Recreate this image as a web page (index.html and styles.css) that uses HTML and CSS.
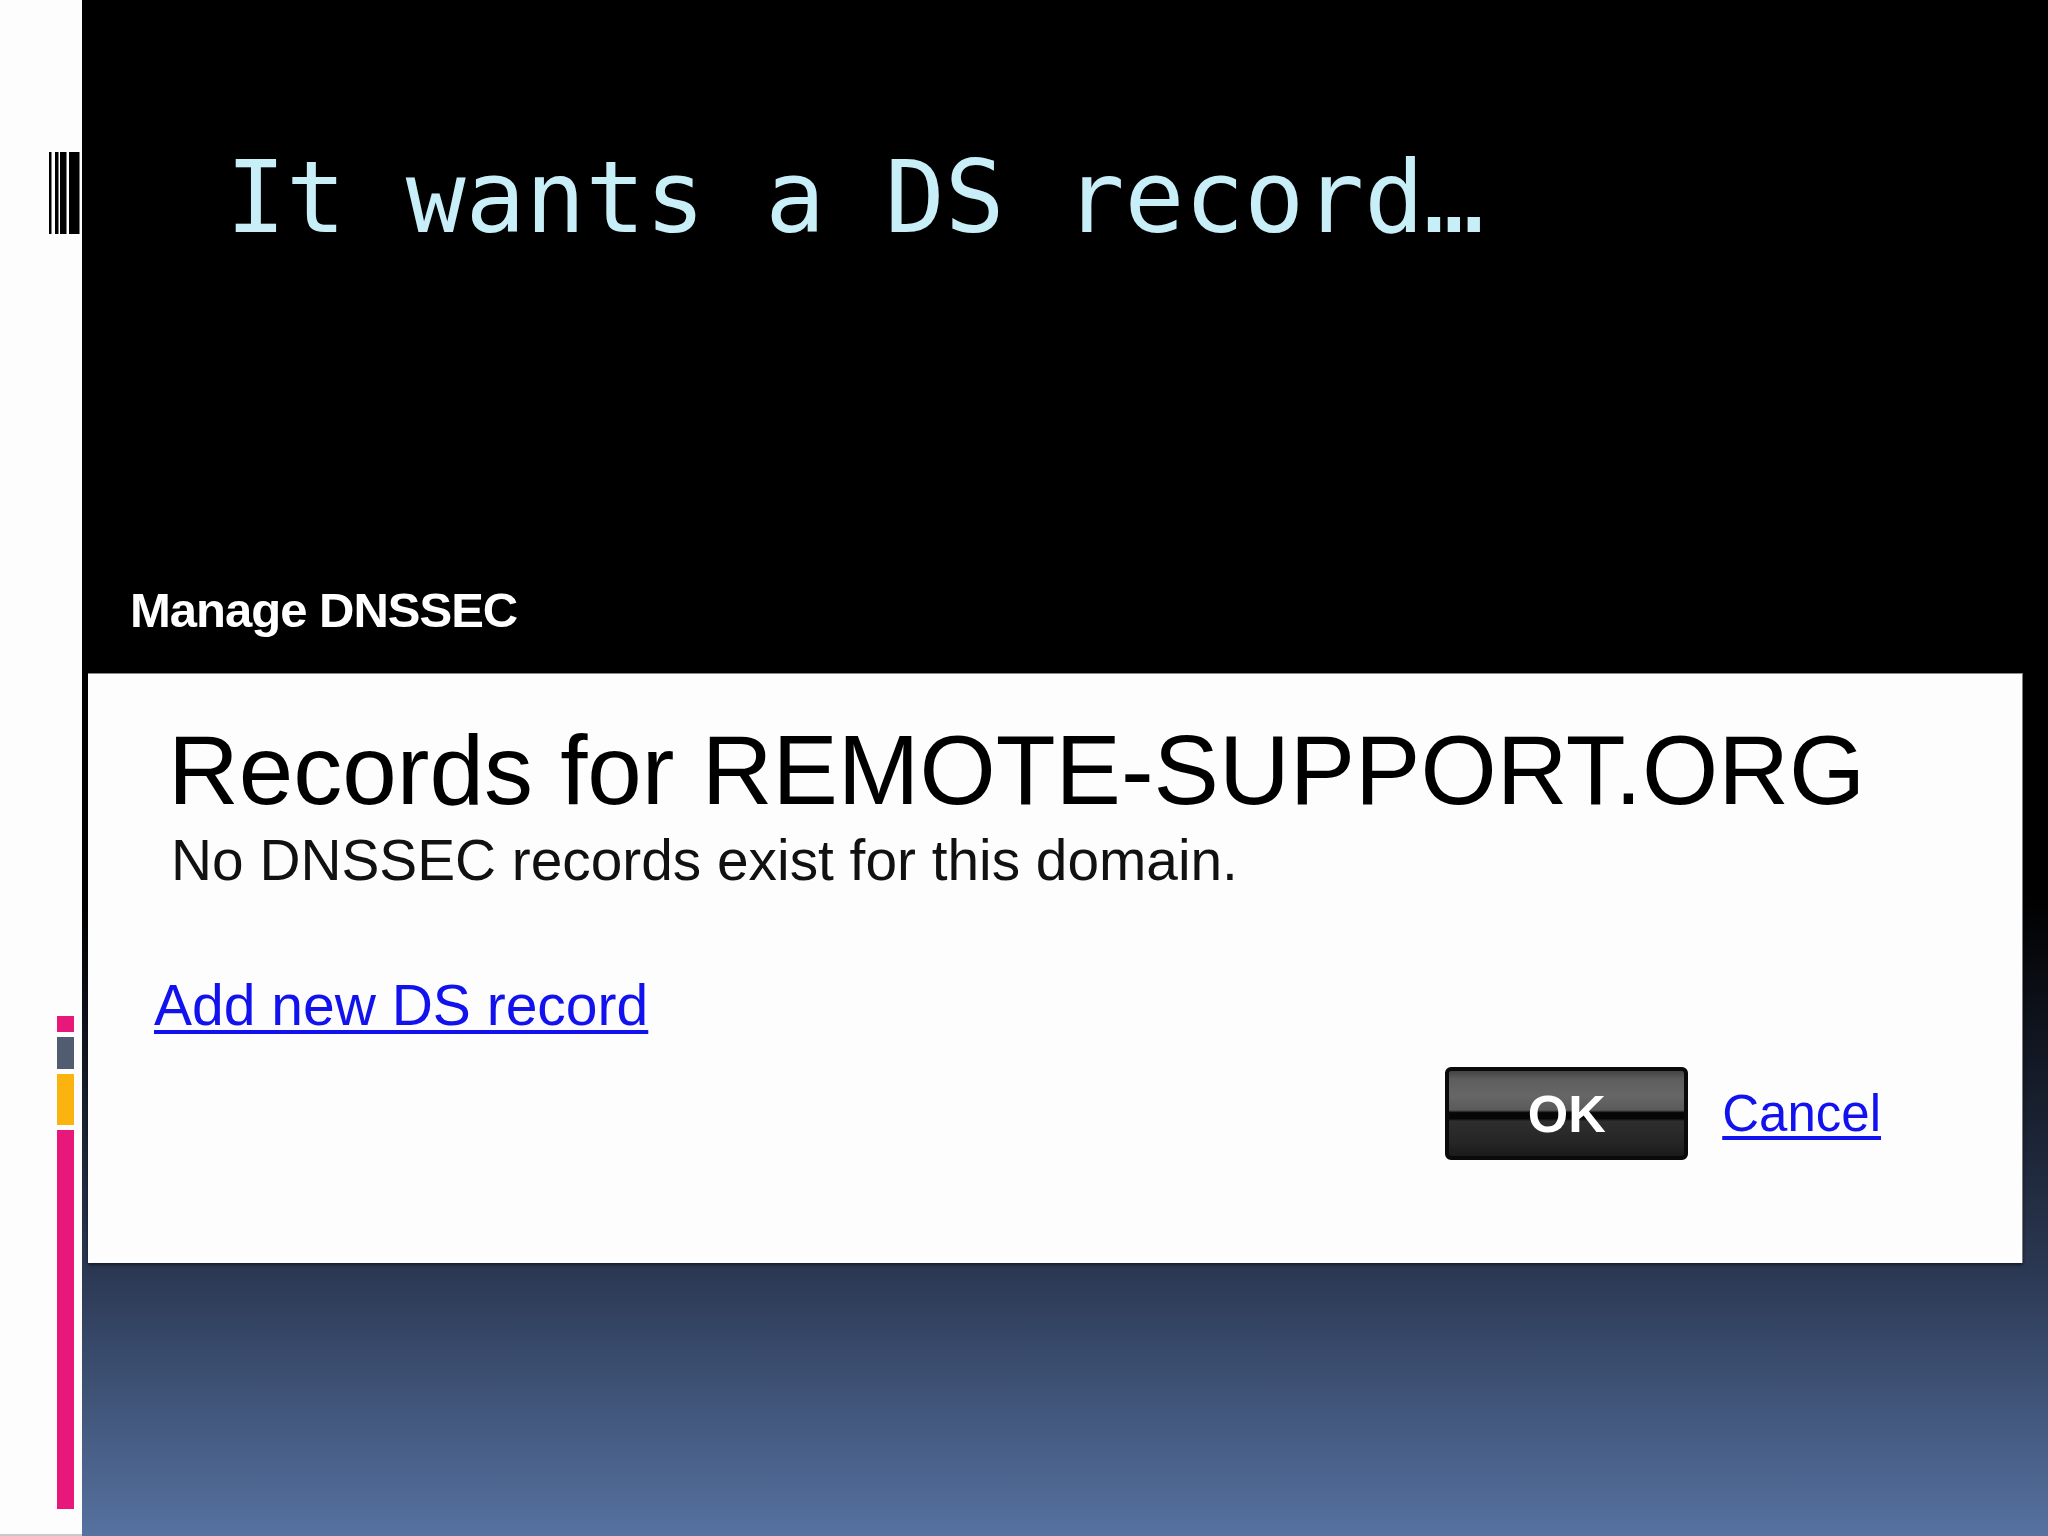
FILE: index.html
```html
<!DOCTYPE html>
<html lang="en">
<head>
    <meta charset="UTF-8">
    <title>It wants a DS record</title>
    <link rel="stylesheet" href="styles.css">
</head>
<body>
<div class="slide">
    <!-- left strip with the theme marks -->
    <aside class="strip">
        <svg class="barcode" width="31" height="82" viewBox="0 0 31 82">
            <rect x="0" y="0" width="2.5" height="82" fill="#000"/>
            <rect x="6" y="0" width="3.5" height="82" fill="#000"/>
            <rect x="11" y="0" width="6.5" height="82" fill="#000"/>
            <rect x="20" y="0" width="10.5" height="82" fill="#000"/>
        </svg>
        <div class="marks">
            <div class="mark pink-short"></div>
            <div class="mark gray"></div>
            <div class="mark yellow"></div>
            <div class="mark pink-long"></div>
        </div>
    </aside>

    <main class="stage">
        <h1 class="slide-title">It wants a DS record…</h1>

        <div class="dialog">
            <div class="dialog-title">Manage DNSSEC</div>
            <div class="dialog-body">
                <h2 class="records-title">Records for REMOTE-SUPPORT.ORG</h2>
                <p class="records-note">No DNSSEC records exist for this domain.</p>
                <a class="add-link" href="#">Add new DS record</a>
                <div class="dialog-actions">
                    <button class="ok-btn">OK</button>
                    <a class="cancel-link" href="#">Cancel</a>
                </div>
            </div>
        </div>
    </main>
</div>
</body>
</html>
```

FILE: styles.css
```css
html, body {
    margin: 0;
    padding: 0;
}
body {
    width: 2048px;
    height: 1536px;
    overflow: hidden;
    font-family: 'Liberation Sans', Arial, sans-serif;
}
.slide {
    display: flex;
    width: 2048px;
    height: 1536px;
}
.strip {
    width: 82px;
    flex: none;
    background-color: #fdfdfd;
    display: flex;
    flex-direction: column;
    align-items: flex-end;
    box-sizing: border-box;
    border-bottom: 2px solid #c9c9c9;
}
.barcode {
    display: block;
    margin-top: 152px;
    margin-right: 2px;
}
.marks {
    margin-top: auto;
    margin-bottom: 25px;
    margin-right: 8px;
    width: 17px;
    display: flex;
    flex-direction: column;
    gap: 5px;
}
.mark {
    width: 17px;
}
.pink-short {
    height: 16px;
    background-color: #e8177a;
}
.gray {
    height: 32px;
    background-color: #525c70;
}
.yellow {
    height: 51px;
    background-color: #fbb40f;
}
.pink-long {
    height: 379px;
    background-color: #e8177a;
}
.stage {
    flex: 1;
    display: flex;
    flex-direction: column;
    background: linear-gradient(to bottom, #000 0%, #000 58.5%, #2b3853 82.7%, #5672a0 100%);
}
.slide-title {
    margin: 140px 0 0 144px;
    font-family: 'DejaVu Sans Mono', monospace;
    font-weight: normal;
    font-size: 99.5px;
    line-height: 116px;
    color: #c8eef8;
    white-space: nowrap;
}
.dialog {
    margin-top: 330px;
    margin-left: 6px;
    width: 1935px;
}
.dialog-title {
    margin-left: 42px;
    font-weight: bold;
    font-size: 49px;
    line-height: 49px;
    letter-spacing: -1px;
    color: #fff;
}
.dialog-body {
    margin-top: 38px;
    height: 590px;
    box-sizing: border-box;
    background-color: #fdfdfe;
    border-top: 1px solid #8a8a8a;
    border-right: 1px solid #7a7a7a;
    box-shadow: 0 2px 3px rgba(0, 0, 0, 0.5);
    padding: 47px 141px 0 66px;
    display: flex;
    flex-direction: column;
    align-items: flex-start;
}
.records-title {
    margin: 0 0 0 14px;
    font-weight: normal;
    font-size: 98px;
    line-height: 98px;
    color: #000;
    white-space: nowrap;
}
.records-note {
    margin: 13px 0 0 17px;
    font-size: 56.8px;
    line-height: 57px;
    color: #111;
    white-space: nowrap;
}
.add-link {
    margin-top: 88px;
    font-size: 57px;
    line-height: 57px;
    color: #1212ee;
    text-decoration-thickness: 4px;
    text-underline-offset: 5px;
}
.dialog-actions {
    align-self: stretch;
    margin-top: 33px;
    display: flex;
    justify-content: flex-end;
    align-items: center;
    gap: 34px;
}
.ok-btn {
    width: 243px;
    height: 93px;
    box-sizing: border-box;
    border: 4px solid #0a0a0a;
    border-radius: 6px;
    padding: 0;
    font-family: 'Liberation Sans', Arial, sans-serif;
    font-weight: bold;
    font-size: 52px;
    line-height: 52px;
    color: #fff;
    background: linear-gradient(to bottom, #444 0%, #5e5e5e 10%, #666 30%, #5a5a5a 46%, #060606 49%, #060606 56%, #2e2e2e 59%, #252525 85%, #1a1a1a 100%);
}
.cancel-link {
    font-size: 51px;
    line-height: 51px;
    color: #1212ee;
    text-decoration-thickness: 4px;
    text-underline-offset: 5px;
}
```
